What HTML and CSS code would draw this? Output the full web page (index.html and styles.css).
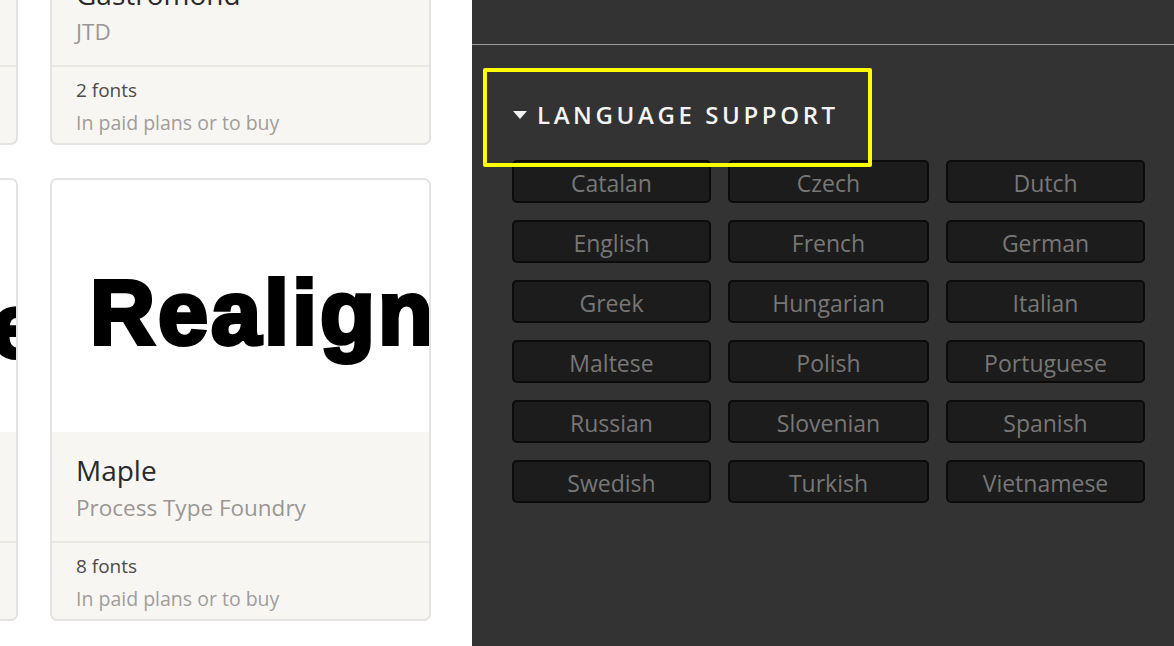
FILE: index.html
```html
<!DOCTYPE html>
<html>
<head>
<meta charset="utf-8">
<link rel="stylesheet" href="styles.css">
</head>
<body>
<div class="page">
  <section class="results">
    <div class="grid">
      <div class="card">
        <div class="preview"></div>
        <div class="info">
          <div class="name">Gastromond</div>
          <div class="foundry">Lorem</div>
        </div>
        <div class="meta">
          <div class="count">3 fonts</div>
          <div class="avail">In paid plans or to buy</div>
        </div>
      </div>
      <div class="card">
        <div class="preview"></div>
        <div class="info">
          <div class="name">Gastromond</div>
          <div class="foundry">JTD</div>
        </div>
        <div class="meta">
          <div class="count">2 fonts</div>
          <div class="avail">In paid plans or to buy</div>
        </div>
      </div>
      <div class="card">
        <div class="preview"><span class="sample sample-right">Stone</span></div>
        <div class="info">
          <div class="name">Typeface</div>
          <div class="foundry">Foundry</div>
        </div>
        <div class="meta">
          <div class="count">4 fonts</div>
          <div class="avail">In paid plans or to buy</div>
        </div>
      </div>
      <div class="card">
        <div class="preview"><span class="sample">Realign</span></div>
        <div class="info">
          <div class="name">Maple</div>
          <div class="foundry">Process Type Foundry</div>
        </div>
        <div class="meta">
          <div class="count">8 fonts</div>
          <div class="avail">In paid plans or to buy</div>
        </div>
      </div>
    </div>
  </section>
  <aside class="panel">
    <div class="panel-top"></div>
    <div class="filter">
      <div class="filter-head">
        <span class="caret"></span>
        <span class="filter-title">LANGUAGE SUPPORT</span>
        <span class="highlight"></span>
      </div>
      <div class="langs">
        <button class="lang">Catalan</button>
        <button class="lang">Czech</button>
        <button class="lang">Dutch</button>
        <button class="lang">English</button>
        <button class="lang">French</button>
        <button class="lang">German</button>
        <button class="lang">Greek</button>
        <button class="lang">Hungarian</button>
        <button class="lang">Italian</button>
        <button class="lang">Maltese</button>
        <button class="lang">Polish</button>
        <button class="lang">Portuguese</button>
        <button class="lang">Russian</button>
        <button class="lang">Slovenian</button>
        <button class="lang">Spanish</button>
        <button class="lang">Swedish</button>
        <button class="lang">Turkish</button>
        <button class="lang">Vietnamese</button>
      </div>
    </div>
  </aside>
</div>
</body>
</html>
```

FILE: styles.css
```css
html, body {
  margin: 0;
  padding: 0;
  height: 100%;
  overflow: hidden;
}
body {
  font-family: "Open Sans", "Noto Sans", sans-serif;
  background: #ffffff;
}
.page {
  display: flex;
  height: 646px;
}
.results {
  width: 472px;
  flex: none;
  background: #ffffff;
  overflow: hidden;
}
.grid {
  display: grid;
  grid-template-columns: 381px 381px;
  grid-auto-rows: 443px;
  column-gap: 32px;
  row-gap: 33px;
  margin-left: -363px;
  margin-top: -298px;
}
.card {
  box-sizing: border-box;
  border: 2px solid #e4e3e2;
  border-radius: 7px;
  background: #f8f6f3;
  display: flex;
  flex-direction: column;
  overflow: hidden;
}
.preview {
  height: 252px;
  flex: none;
  background: #ffffff;
  display: flex;
  align-items: center;
  overflow: hidden;
  white-space: nowrap;
}
.sample {
  font-family: "Liberation Sans", Arial, sans-serif;
  font-weight: 700;
  font-size: 90px;
  letter-spacing: 3px;
  -webkit-text-stroke: 4px #000;
  color: #000;
  padding-left: 38px;
  margin-top: 14px;
}
.sample-right {
  padding-left: 0;
  margin-left: auto;
  margin-right: -28px;
  margin-top: 40px;
}
.info {
  height: 111px;
  flex: none;
  box-sizing: border-box;
  padding: 20px 24px 0;
  border-bottom: 2px solid #ebe8e4;
}
.name {
  font-size: 28px;
  line-height: 36px;
  color: #2a2a2a;
}
.foundry {
  font-size: 22.5px;
  line-height: 39px;
  color: #999694;
}
.meta {
  padding: 8px 24px 0;
}
.count {
  font-size: 19px;
  line-height: 30px;
  color: #4b4b4b;
}
.avail {
  font-size: 19.5px;
  line-height: 36px;
  color: #a09d9a;
}
.panel {
  flex: 1;
  background: #333333;
}
.panel-top {
  height: 44px;
  border-bottom: 1px solid #9c9c9c;
}
.filter {
  padding: 0 29px 0 40px;
}
.filter-head {
  position: relative;
  height: 115px;
  display: flex;
  align-items: center;
  gap: 10px;
  padding-top: 23px;
  box-sizing: border-box;
}
.caret {
  width: 0;
  height: 0;
  border-left: 7px solid transparent;
  border-right: 7px solid transparent;
  border-top: 8px solid #f2f2f2;
  margin-left: 1px;
  margin-top: 2px;
}
.filter-title {
  font-size: 24px;
  font-weight: 600;
  letter-spacing: 3.6px;
  color: #f4f4f4;
}
.highlight {
  position: absolute;
  left: -29px;
  top: 23px;
  width: 381px;
  height: 91px;
  border: 4px solid #ffff00;
  border-radius: 2px;
}
.langs {
  display: grid;
  grid-template-columns: 199px 201px 199px;
  grid-auto-rows: 43px;
  column-gap: 17px;
  row-gap: 17px;
}
.lang {
  box-sizing: border-box;
  background: #1c1c1c;
  border: 2px solid #0b0b0b;
  border-radius: 5px;
  color: #777777;
  font-family: "Open Sans", "Noto Sans", sans-serif;
  font-size: 23px;
  line-height: 1;
  padding: 3px 0 0;
  text-align: center;
}
```
